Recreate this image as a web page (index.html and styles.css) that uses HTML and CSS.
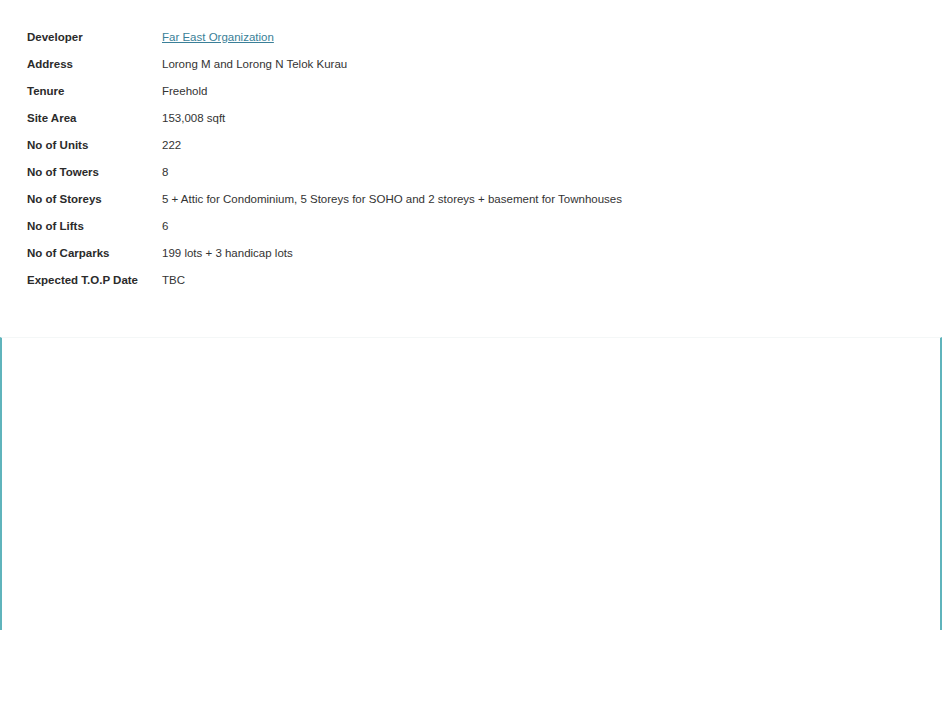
FILE: index.html
```html
<!DOCTYPE html>
<html>
<head>
<meta charset="utf-8">
<link rel="stylesheet" href="styles.css">
</head>
<body>
<div class="details">
  <div class="row"><div class="label">Developer</div><div class="value"><a href="#" class="link">Far East Organization</a></div></div>
  <div class="row"><div class="label">Address</div><div class="value">Lorong M and Lorong N Telok Kurau</div></div>
  <div class="row"><div class="label">Tenure</div><div class="value">Freehold</div></div>
  <div class="row"><div class="label">Site Area</div><div class="value">153,008 sqft</div></div>
  <div class="row"><div class="label">No of Units</div><div class="value">222</div></div>
  <div class="row"><div class="label">No of Towers</div><div class="value">8</div></div>
  <div class="row"><div class="label">No of Storeys</div><div class="value">5 + Attic for Condominium, 5 Storeys for SOHO and 2 storeys + basement for Townhouses</div></div>
  <div class="row"><div class="label">No of Lifts</div><div class="value">6</div></div>
  <div class="row"><div class="label">No of Carparks</div><div class="value">199 lots + 3 handicap lots</div></div>
  <div class="row"><div class="label">Expected T.O.P Date</div><div class="value">TBC</div></div>
</div>
<div class="panel"></div>
</body>
</html>
```
FILE: styles.css
```css
html, body {
  margin: 0;
  padding: 0;
  background: #ffffff;
}
body {
  font-family: "Liberation Sans", Arial, sans-serif;
  font-size: 11.5px;
  color: #333333;
}
.details {
  padding: 24px 0 0 27px;
  height: 312px;
  box-sizing: border-box;
}
.row {
  display: flex;
  height: 27px;
  line-height: 27px;
}
.label {
  width: 135px;
  font-weight: bold;
  color: #2b2b2b;
}
.value {
  color: #333333;
}
.link {
  color: #3a7f98;
  text-decoration: underline;
}
.panel {
  margin-top: 25px;
  margin-right: 1px;
  height: 292px;
  border-left: 2px solid #5fb4bc;
  border-right: 2px solid #5fb4bc;
  border-top: 1px solid #f4f7f7;
}
```
